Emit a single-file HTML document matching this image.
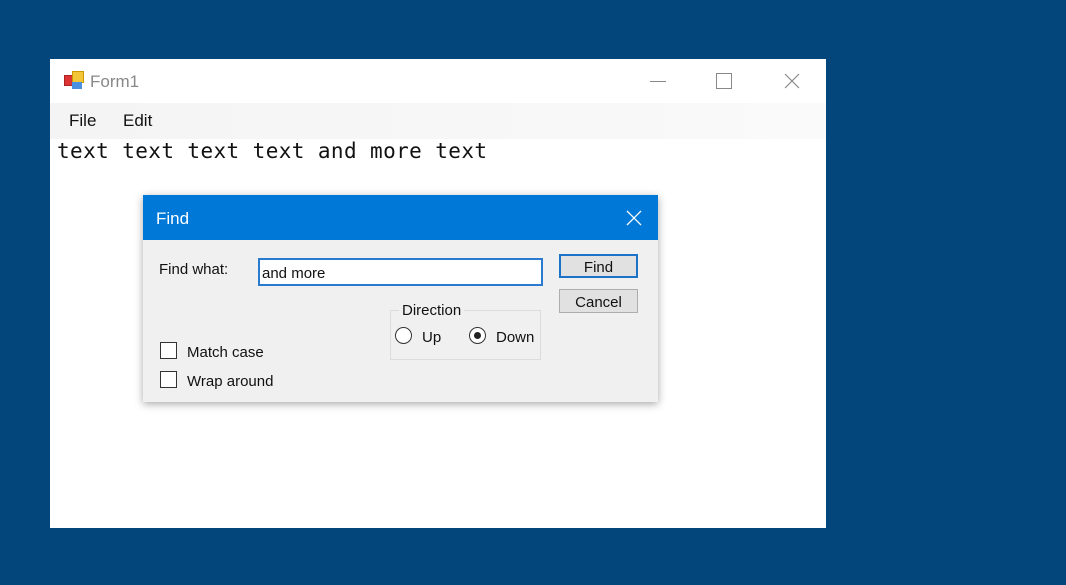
<!DOCTYPE html>
<html><head><style>
body{margin:0;width:1066px;height:585px;background:#02467c;position:relative;overflow:hidden;font-family:"Liberation Sans",sans-serif;}
.a{position:absolute}
</style></head><body>
<div class="a" style="left:50px;top:59px;width:776px;height:469px;background:#fff;"></div>
<div class="a" style="left:64px;top:71px;width:20px;height:20px;">
<div class="a" style="left:0;top:4px;width:9px;height:9px;background:#d33;border:1px solid #a22"></div>
<div class="a" style="left:8px;top:0;width:10px;height:10px;background:#f3c63a;border:1px solid #c90"></div>
<div class="a" style="left:8px;top:11px;width:10px;height:7px;background:#4a8fe0"></div>
</div>
<div class="a" style="left:90px;top:72px;font-size:17px;color:#888;">Form1</div>
<div class="a" style="left:650px;top:81px;width:16px;height:1px;background:#888"></div>
<div class="a" style="left:716px;top:73px;width:14px;height:14px;border:1px solid #888"></div>
<svg class="a" style="left:784px;top:73px" width="16" height="16"><path d="M1 1L15 15M15 1L1 15" stroke="#888" stroke-width="1.2"/></svg>
<div class="a" style="left:50px;top:103px;width:776px;height:36px;background:linear-gradient(90deg,#f4f4f4,#f8f8f8 70%,#fafafa);"></div>
<div class="a" style="left:69px;top:111px;font-size:17px;color:#111;">File</div>
<div class="a" style="left:123px;top:111px;font-size:17px;color:#111;">Edit</div>
<div class="a" style="left:57px;top:139px;font-family:'DejaVu Sans Mono','Liberation Mono',monospace;font-size:21px;letter-spacing:0.4px;color:#111;">text text text text and more text</div>

<div class="a" style="left:143px;top:195px;width:515px;height:207px;background:#f0f0f0;box-shadow:0 2px 8px rgba(0,0,0,.35);"></div>
<div class="a" style="left:143px;top:195px;width:515px;height:45px;background:#0078d7;"></div>
<div class="a" style="left:156px;top:209px;font-size:17px;color:#fff;">Find</div>
<svg class="a" style="left:626px;top:210px" width="16" height="16"><path d="M1 1L15 15M15 1L1 15" stroke="#fff" stroke-width="1.3"/></svg>
<div class="a" style="left:159px;top:261px;font-size:15px;color:#111;">Find what:</div>
<div class="a" style="left:258px;top:258px;width:285px;height:28px;background:#fff;border:2px solid #2a7bd0;box-sizing:border-box;"></div>
<div class="a" style="left:262px;top:265px;font-size:15px;color:#111;">and more</div>
<div class="a" style="left:559px;top:254px;width:79px;height:24px;background:#e1e1e1;border:2px solid #1a73c8;box-sizing:border-box;text-align:center;font-size:15px;line-height:23px;color:#111;">Find</div>
<div class="a" style="left:559px;top:289px;width:79px;height:24px;background:#e1e1e1;border:1px solid #adadad;box-sizing:border-box;text-align:center;font-size:15px;line-height:25px;color:#111;">Cancel</div>
<div class="a" style="left:390px;top:310px;width:151px;height:50px;border:1px solid #dcdcdc;box-sizing:border-box;"></div>
<div class="a" style="left:399px;top:302px;padding:0 3px;background:#f0f0f0;font-size:15px;color:#111;">Direction</div>
<div class="a" style="left:395px;top:327px;width:17px;height:17px;border:1px solid #333;border-radius:50%;background:#fff;box-sizing:border-box;"></div>
<div class="a" style="left:422px;top:329px;font-size:15px;color:#111;">Up</div>
<div class="a" style="left:469px;top:327px;width:17px;height:17px;border:1px solid #333;border-radius:50%;background:#fff;box-sizing:border-box;"></div>
<div class="a" style="left:474px;top:332px;width:7px;height:7px;border-radius:50%;background:#222;"></div>
<div class="a" style="left:496px;top:329px;font-size:15px;color:#111;">Down</div>
<div class="a" style="left:160px;top:342px;width:17px;height:17px;border:1px solid #333;background:#fff;box-sizing:border-box;"></div>
<div class="a" style="left:187px;top:344px;font-size:15px;color:#111;">Match case</div>
<div class="a" style="left:160px;top:371px;width:17px;height:17px;border:1px solid #333;background:#fff;box-sizing:border-box;"></div>
<div class="a" style="left:187px;top:373px;font-size:15px;color:#111;">Wrap around</div>
</body></html>
